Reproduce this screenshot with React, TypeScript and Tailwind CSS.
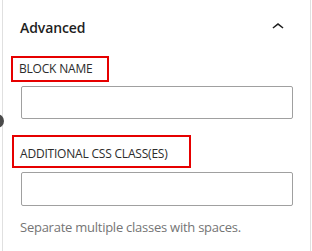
import React from 'react';

const ChevronUp: React.FC = () => (
  <svg width="24" height="24" viewBox="0 0 24 24" className="fill-[#1e1e1e]">
    <path d="M6.5 12.4L12 8l5.5 4.4-.9 1.2L12 10l-4.6 3.6-1-1.2z" />
  </svg>
);

const FieldLabel: React.FC<{ text: string; tall?: boolean }> = ({ text, tall }) => (
  <div
    className={`flex border-2 border-[#e60000] pl-[6px] ${
      tall ? 'h-[33px] w-[179px] ml-0 items-end pb-[4px]' : 'h-[26px] w-[98px] -ml-px items-center'
    }`}
  >
    <span className="text-[12px] leading-[16px] font-medium uppercase tracking-[-0.2px] text-[#2c2c2c] whitespace-nowrap">
      {text}
    </span>
  </div>
);

export default function App() {
  return (
    <div
      className="relative w-[312px] h-[251px] bg-white overflow-hidden"
      style={{ fontFamily: '"Open Sans", "Noto Sans", sans-serif' }}
    >
      <div className="ml-[2px] w-[309px] h-full border-l border-r border-[#e0e0e0] pl-[9px]">
        {/* Panel header */}
        <div className="flex items-start justify-between h-[56px] pt-[18px] pr-[20px]">
          <span className="ml-[8px] text-[14px] leading-[20px] font-semibold tracking-[-0.1px] text-[#1e1e1e]">
            Advanced
          </span>
          <div className="-mt-[3px]">
            <ChevronUp />
          </div>
        </div>

        <FieldLabel text="Block name" />
        <input
          type="text"
          className="block mt-[4px] ml-[9px] w-[272px] h-[33px] border border-[#a0a0a0] rounded-[2px] bg-white outline-none"
        />

        <div className="mt-[16px]">
          <FieldLabel text="Additional CSS class(es)" tall />
        </div>
        <input
          type="text"
          className="block mt-[4px] ml-[9px] w-[272px] h-[34px] border border-[#a0a0a0] rounded-[2px] bg-white outline-none"
        />
        <p className="mt-[12px] ml-[8px] text-[13px] leading-[18px] tracking-[-0.25px] text-[#757575]">
          Separate multiple classes with spaces.
        </p>
      </div>

      {/* drag handle peeking from the left */}
      <div className="absolute left-[-10px] top-[114px] w-[14px] h-[14px] rounded-full bg-[#4a4a4a]" />
    </div>
  );
}
